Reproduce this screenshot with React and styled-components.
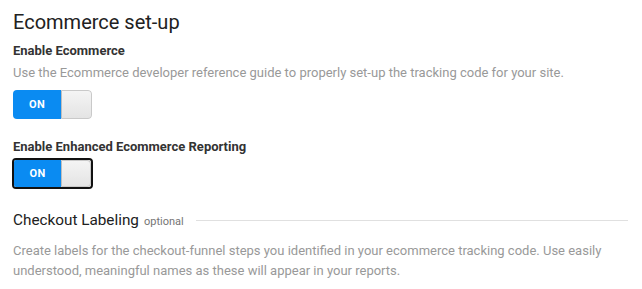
import React from "react";
import styled, { createGlobalStyle } from "styled-components";

const Global = createGlobalStyle`
  html, body { margin: 0; padding: 0; background: #fff; }
  body { font-family: Roboto, "Noto Sans", Arial, sans-serif; }
`;

const Page = styled.div`
  padding: 9px 13px 0 13px;
  width: 615px;
`;

const Title = styled.h1`
  margin: 0;
  font-size: 20px;
  font-weight: 400;
  line-height: 26px;
  color: #212121;
`;

const Label = styled.div`
  margin-top: ${(p) => p.$mt || 0}px;
  font-size: 13px;
  font-weight: 700;
  line-height: 18px;
  color: #333;
`;

const Desc = styled.p`
  margin: ${(p) => p.$mt || 0}px 0 0 0;
  font-size: 13px;
  line-height: 20px;
  color: #999;
`;

const Toggle = styled.button`
  display: flex;
  margin-top: ${(p) => p.$mt || 0}px;
  margin-left: ${(p) => (p.$focused ? -1 : 0)}px;
  width: ${(p) => (p.$focused ? 81 : 79)}px;
  height: ${(p) => (p.$focused ? 31 : 29)}px;
  padding: 0;
  border: ${(p) => (p.$focused ? "2px solid #111" : "0")};
  border-radius: 4px;
  overflow: hidden;
  background: #fff;
  cursor: pointer;
  box-sizing: border-box;
`;

const OnPart = styled.span`
  flex: 0 0 ${(p) => (p.$focused ? 47 : 48)}px;
  display: flex;
  align-items: center;
  justify-content: center;
  background: #0a8bf2;
  color: #fff;
  font-family: Roboto, Arial, sans-serif;
  font-size: 11px;
  font-weight: 700;
  letter-spacing: 0.3px;
`;

const Knob = styled.span`
  flex: 1;
  background: linear-gradient(#f4f4f4, #e4e4e4);
  border: 1px solid #c9c9c9;
  border-left: 1px solid #bdbdbd;
  border-radius: 0 4px 4px 0;
`;

const SectionHead = styled.div`
  display: flex;
  align-items: center;
  margin-top: ${(p) => p.$mt || 0}px;
  width: 615px;
`;

const SubTitle = styled.span`
  font-size: 15.3px;
  line-height: 24px;
  color: #212121;
`;

const Optional = styled.span`
  margin-left: 5px;
  font-size: 11px;
  color: #757575;
  position: relative;
  top: 1px;
`;

const Rule = styled.div`
  flex: 1;
  height: 1px;
  background: #e0e0e0;
  margin-left: 12px;
`;

function Switch({ focused, mt }) {
  return (
    <Toggle $focused={focused} $mt={mt} type="button">
      <OnPart $focused={focused}>ON</OnPart>
      <Knob />
    </Toggle>
  );
}

export default function App() {
  return (
    <>
      <Global />
      <Page>
        <Title>Ecommerce set-up</Title>
        <Label $mt={7}>Enable Ecommerce</Label>
        <Desc $mt={3}>
          Use the Ecommerce developer reference guide to properly set-up the tracking code for your site.
        </Desc>
        <Switch mt={7} />
        <Label $mt={19}>Enable Enhanced Ecommerce Reporting</Label>
        <Switch focused mt={2} />
        <SectionHead $mt={19}>
          <SubTitle>Checkout Labeling</SubTitle>
          <Optional>optional</Optional>
          <Rule />
        </SectionHead>
        <Desc $mt={9}>
          Create labels for the checkout-funnel steps you identified in your ecommerce tracking code. Use easily understood, meaningful names as these will appear in your reports.
        </Desc>
      </Page>
    </>
  );
}
